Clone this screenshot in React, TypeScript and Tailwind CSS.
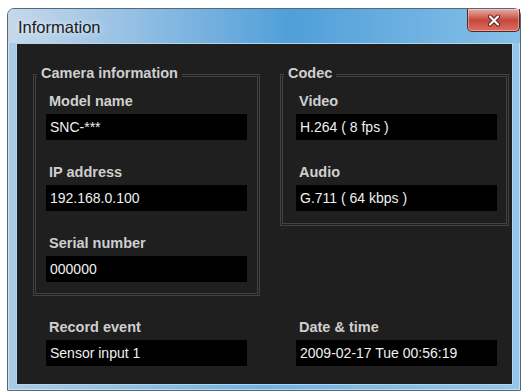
import React from "react";

const font = { fontFamily: '"Liberation Sans", Arial, sans-serif' };

interface FieldProps {
  label: string;
  value: string;
}

const Field: React.FC<FieldProps> = ({ label, value }) => (
  <div className="flex flex-col">
    <div className="h-[17px] pl-[3px] text-[14.5px] leading-[17px] font-bold text-[#cfcfcf]">{label}</div>
    <div className="mt-[4px] h-[26px] w-[201px] bg-black pl-[4px] flex items-center text-[14px] text-[#f0f0f0] whitespace-pre">
      {value}
    </div>
  </div>
);

interface GroupBoxProps {
  title: string;
  className: string;
  children: React.ReactNode;
}

const GroupBox: React.FC<GroupBoxProps> = ({ title, className, children }) => (
  <div className={"relative border-[3px] border-double border-[#424242] " + className}>
    <span className="absolute left-[1px] -top-[12px] bg-[#1f1f1f] px-[4px] text-[14.5px] leading-[17px] font-bold text-[#cfcfcf]">
      {title}
    </span>
    <div className="flex flex-col gap-6">{children}</div>
  </div>
);

const CloseButton = () => (
  <div className="w-[53px] h-[23px] rounded-b-[5px] border border-t-0 border-[#5e2320] bg-gradient-to-b from-[#e9aba2] via-[#c5473d] to-[#dd6e62] flex items-center justify-center shadow-[inset_0_0_0_1px_rgba(255,255,255,0.35)]">
    <svg width="14" height="13" viewBox="0 0 14 13">
      <path d="M3 2.5 L11 10.5 M11 2.5 L3 10.5" stroke="#5a1f1a" strokeWidth="4" strokeLinecap="round" />
      <path d="M3 2.5 L11 10.5 M11 2.5 L3 10.5" stroke="#ffffff" strokeWidth="2.2" strokeLinecap="round" />
    </svg>
  </div>
);

export default function App() {
  return (
    <div className="w-[524px] h-[392px] bg-white pt-[8px] pl-[7px]" style={font}>
      <div className="w-[514px] h-[383px] rounded-t-[7px] border border-[#56687a] bg-gradient-to-r from-[#a9cbe6] via-[#6fb3e2] to-[#94c6ea] flex flex-col shadow-[inset_0_0_0_1px_rgba(255,255,255,0.45)]">
        <div className="h-[34px] flex items-start justify-between rounded-t-[6px] bg-gradient-to-r from-[#c6d9ea] via-[#4f9fd9] via-55% to-[#86c0e8]">
          <div className="mt-[9px] ml-[10px] text-[16.5px] leading-[19px] text-[#1c1c1c] [text-shadow:0_0_6px_rgba(255,255,255,0.9)]">
            Information
          </div>
          <CloseButton />
        </div>
        <div className="mr-[7px] ml-[8px] h-[342px] border border-[#b8d4e8] bg-[#1f1f1f] pt-[30px] pl-[16px]">
          <div className="grid grid-cols-[227px_229px] gap-x-[20px] items-start">
            <GroupBox title="Camera information" className="pt-[16px] pl-[10px] pr-[10px] pb-[11px]">
              <Field label="Model name" value="SNC-***" />
              <Field label="IP address" value="192.168.0.100" />
              <Field label="Serial number" value="000000" />
            </GroupBox>
            <GroupBox title="Codec" className="pt-[16px] pl-[13px] pr-[9px] pb-[12px]">
              <Field label="Video" value="H.264 ( 8 fps )" />
              <Field label="Audio" value="G.711 ( 64 kbps )" />
            </GroupBox>
          </div>
          <div className="mt-[23px] grid grid-cols-[227px_229px] gap-x-[20px]">
            <div className="pl-[13px]">
              <Field label="Record event" value="Sensor input 1" />
            </div>
            <div className="pl-[16px]">
              <Field label="Date & time" value="2009-02-17 Tue 00:56:19" />
            </div>
          </div>
        </div>
      </div>
    </div>
  );
}
